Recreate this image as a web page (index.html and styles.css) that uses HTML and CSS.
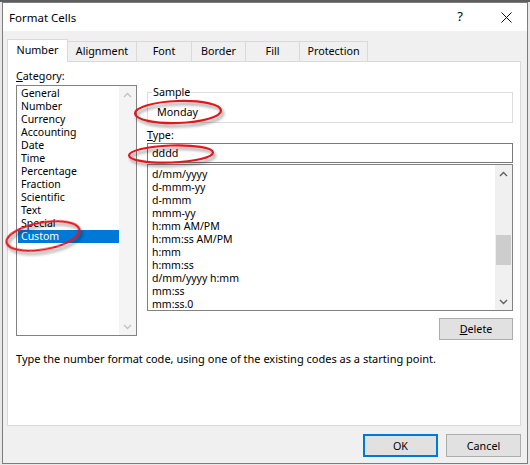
FILE: index.html
```html
<!DOCTYPE html>
<html>
<head>
<meta charset="utf-8">
<title>Format Cells</title>
<link rel="stylesheet" href="styles.css">
</head>
<body>
<div class="window">
  <div class="titlebar">
    <span class="title">Format Cells</span>
    <span class="cap-btn help">?</span>
    <span class="cap-btn close"><svg width="11" height="11" viewBox="0 0 11 11"><path d="M0.5 0.5 L10.5 10.5 M10.5 0.5 L0.5 10.5" stroke="#111" stroke-width="1" fill="none"/></svg></span>
  </div>
  <div class="client">
    <div class="tabs">
      <div class="tab sel w-number">Number</div>
      <div class="tab w-align">Alignment</div>
      <div class="tab w-font">Font</div>
      <div class="tab w-border">Border</div>
      <div class="tab w-fill">Fill</div>
      <div class="tab w-prot">Protection</div>
    </div>
    <div class="panel">
      <div class="cols">
        <div class="leftcol">
          <div class="label"><u>C</u>ategory:</div>
          <div class="catlist">
            <ul class="items cat-items">
              <li>General</li>
              <li>Number</li>
              <li>Currency</li>
              <li>Accounting</li>
              <li>Date</li>
              <li>Time</li>
              <li>Percentage</li>
              <li>Fraction</li>
              <li>Scientific</li>
              <li>Text</li>
              <li>Special</li>
              <li class="sel">Custom</li>
            </ul>
            <div class="vscroll disabled">
              <div class="arrow"><svg width="9" height="6" viewBox="0 0 9 6"><polyline points="1,5 4.5,1.5 8,5" fill="none" stroke-width="1.4"/></svg></div>
              <div class="track"></div>
              <div class="arrow"><svg width="9" height="6" viewBox="0 0 9 6"><polyline points="1,1 4.5,4.5 8,1" fill="none" stroke-width="1.4"/></svg></div>
            </div>
          </div>
        </div>
        <div class="rightcol">
          <fieldset class="sample">
            <legend>Sample</legend>
            <div class="sample-val">Monday</div>
          </fieldset>
          <div class="label type-label"><u>T</u>ype:</div>
          <div class="typeinput">dddd</div>
          <div class="typelist">
            <ul class="items type-items">
              <li>d/mm/yyyy</li>
              <li>d-mmm-yy</li>
              <li>d-mmm</li>
              <li>mmm-yy</li>
              <li>h:mm AM/PM</li>
              <li>h:mm:ss AM/PM</li>
              <li>h:mm</li>
              <li>h:mm:ss</li>
              <li>d/mm/yyyy h:mm</li>
              <li>mm:ss</li>
              <li>mm:ss.0</li>
            </ul>
            <div class="vscroll">
              <div class="arrow"><svg width="9" height="6" viewBox="0 0 9 6"><polyline points="1,5 4.5,1.5 8,5" fill="none" stroke-width="1.4"/></svg></div>
              <div class="track">
                <div class="thumb"></div>
              </div>
              <div class="arrow"><svg width="9" height="6" viewBox="0 0 9 6"><polyline points="1,1 4.5,4.5 8,1" fill="none" stroke-width="1.4"/></svg></div>
            </div>
          </div>
          <div class="delrow"><button class="btn del"><u>D</u>elete</button></div>
        </div>
      </div>
      <p class="desc">Type the number format code, using one of the existing codes as a starting point.</p>
    </div>
    <div class="buttons">
      <button class="btn ok">OK</button>
      <button class="btn">Cancel</button>
    </div>
  </div>
</div>
<svg class="annot" width="530" height="465" viewBox="0 0 530 465">
  <defs>
    <filter id="sh" x="-20%" y="-50%" width="140%" height="200%">
      <feDropShadow dx="2" dy="3" stdDeviation="1.5" flood-color="#000" flood-opacity="0.4"/>
    </filter>
  </defs>
  <g fill="none" stroke="#e3161c" stroke-width="2.2" filter="url(#sh)">
    <ellipse cx="178" cy="112" rx="43" ry="11" transform="rotate(-2 178 112)"/>
    <ellipse cx="171" cy="154" rx="42" ry="8.5" transform="rotate(-2 171 154)"/>
    <ellipse cx="43" cy="236" rx="37" ry="13.5" transform="rotate(-10 43 236)"/>
  </g>
</svg>
</body>
</html>
```

FILE: styles.css
```css
* { box-sizing: border-box; }

html, body {
  margin: 0;
  padding: 0;
}

body {
  width: 530px;
  height: 465px;
  position: relative;
  overflow: hidden;
  background: linear-gradient(#5e5e5e 0, #5e5e5e 2px, #e8e8e8 2px);
  font-family: "Noto Sans", "Open Sans", sans-serif;
  font-size: 10.75px;
  color: #000;
}

.window {
  margin: 2px 0 0 2px;
  width: 526px;
  height: 462px;
  border: 1px solid #7c7c7c;
  display: flex;
  flex-direction: column;
  background: #f0f0f0;
}

.titlebar {
  height: 28px;
  flex: none;
  background: #fff;
  display: flex;
  align-items: center;
  padding-left: 6px;
}

.title {
  font-size: 11.5px;
  flex: 1;
}

.cap-btn {
  display: flex;
  align-items: center;
  justify-content: center;
  height: 28px;
}

.help {
  width: 50px;
  font-size: 13px;
  padding-bottom: 2px;
}

.close {
  width: 42px;
}

.client {
  flex: 1;
  padding: 8px 6px 0 4px;
  display: flex;
  flex-direction: column;
}

.tabs {
  display: flex;
  align-items: flex-end;
  height: 22px;
  flex: none;
}

.tab {
  height: 20px;
  line-height: 18px;
  text-align: center;
  border: 1px solid #d9d9d9;
  border-bottom: none;
  background: #f0f0f0;
  margin-left: -1px;
}

.tab.sel {
  height: 23px;
  line-height: 21px;
  background: #fff;
  margin-bottom: -1px;
  margin-left: 0;
  position: relative;
  z-index: 1;
}

.w-number { width: 61px; }
.w-align { width: 70px; }
.w-font { width: 56px; }
.w-border { width: 55px; }
.w-fill { width: 55px; }
.w-prot { width: 69px; }

.panel {
  height: 365px;
  flex: none;
  background: #fff;
  border: 1px solid #d9d9d9;
  padding: 6px 7px 0 8px;
}

.cols {
  display: flex;
  gap: 10px;
}

.leftcol {
  width: 121px;
}

.rightcol {
  width: 366px;
  margin-top: 16px;
}

.label {
  line-height: 16px;
  height: 16px;
  margin-bottom: 1px;
}

.catlist {
  height: 251px;
  border: 1px solid #828282;
  display: flex;
  background: #fff;
}

.items {
  list-style: none;
  margin: 0;
  padding: 0;
  overflow: hidden;
  font-size: 10.5px;
}

.items li {
  height: 13px;
  line-height: 13px;
  white-space: nowrap;
}

.cat-items {
  width: 102px;
  padding: 1px 0 0 1px;
}

.cat-items li {
  padding-left: 3px;
}

.cat-items li.sel {
  background: #0078d7;
  color: #fff;
}

.vscroll {
  width: 17px;
  flex: none;
  display: flex;
  flex-direction: column;
  background: #f0f0f0;
}

.vscroll.disabled {
  background: #f4f4f4;
}

.arrow {
  height: 17px;
  flex: none;
  display: flex;
  align-items: center;
  justify-content: center;
}

.arrow svg polyline { stroke: #606060; }
.disabled .arrow svg polyline { stroke: #c2c2c2; }

.track {
  flex: 1;
  padding: 0 1px;
}

.thumb {
  margin-top: 53px;
  height: 30px;
  background: #cdcdcd;
}

.sample {
  margin: 0;
  padding: 4px 4px 2px 4px;
  border: 1px solid #dcdcdc;
  min-width: 0;
}

.sample legend {
  padding: 0 1px;
  line-height: 16px;
}

.sample-val {
  line-height: 16px;
  padding-left: 5px;
}

.type-label {
  margin-top: 4px;
  margin-bottom: 0;
}

.typeinput {
  height: 20px;
  border: 1px solid #7a7a7a;
  line-height: 18px;
  padding-left: 4px;
  background: #fff;
}

.typelist {
  margin-top: 1px;
  height: 147px;
  border: 1px solid #828282;
  display: flex;
}

.type-items {
  flex: 1;
  padding: 3px 0 0 4px;
}

.delrow {
  display: flex;
  justify-content: flex-end;
  margin-top: 7px;
}

.btn {
  font-family: inherit;
  font-size: 10.75px;
  color: #000;
  background: #e1e1e1;
  border: 1px solid #adadad;
  padding: 0;
  margin: 0;
}

.del {
  width: 74px;
  height: 22px;
}

.desc {
  margin: 11px 0 0 0;
  line-height: 16px;
  font-size: 11px;
}

.buttons {
  display: flex;
  justify-content: flex-end;
  gap: 8px;
  padding-top: 8px;
}

.buttons .btn {
  width: 75px;
  height: 23px;
}

.btn.ok {
  border: 2px solid #0078d7;
}

.annot {
  position: absolute;
  left: 0;
  top: 0;
  pointer-events: none;
}
```
